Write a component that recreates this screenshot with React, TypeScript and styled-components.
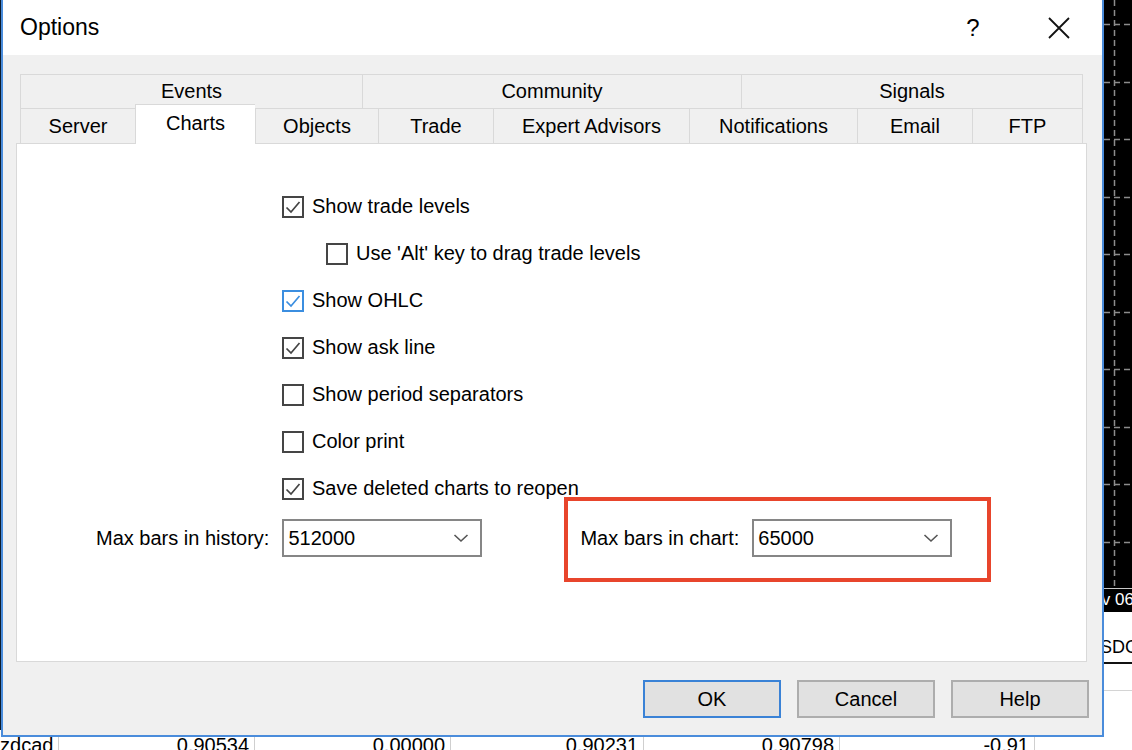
import styled, { createGlobalStyle } from 'styled-components';

const GlobalStyle = createGlobalStyle`
  html, body {
    margin: 0;
    padding: 0;
  }
  body {
    width: 1132px;
    height: 750px;
    overflow: hidden;
    background: #fff;
    font-family: "Liberation Sans", Arial, sans-serif;
    color: #000;
  }
`;

const Desktop = styled.div`
  position: relative;
  width: 1132px;
  height: 750px;
  overflow: hidden;
  display: flex;
  flex-direction: column;
  background: #fff;
`;

const Workspace = styled.div`
  flex: 1;
  display: flex;
  min-height: 0;
`;

const LeftEdge = styled.div`
  width: 1px;
  background: #0d1b2c;
`;

const Behind = styled.div`
  flex: 1;
`;

const RightColumn = styled.div`
  width: 28px;
  display: flex;
  flex-direction: column;
`;

const Chart = styled.div`
  height: 612px;
  background: #000;
  display: flex;
  flex-direction: column;
`;

const TimeAxis = styled.div`
  height: 22px;
  border-top: 1px solid #c8c8c8;
  color: #fff;
  font-size: 17px;
  line-height: 22px;
  white-space: nowrap;
  margin-left: -24px;
`;

const SymbolTabs = styled.div`
  padding-top: 20px;
  height: 30px;
  border-bottom: 2px solid #111;
  font-size: 18px;
  line-height: 30px;
  white-space: nowrap;
  margin-left: -17px;
`;

const Separator = styled.div`
  margin-top: 26px;
  border-top: 1px solid #d4d4d4;
`;

const QuoteRow = styled.div`
  height: 20px;
  display: flex;
  align-items: flex-start;
  font-size: 20px;
  line-height: 30px;
`;

const QuoteCell = styled.div<{ $w: number; $left?: boolean }>`
  width: ${(p) => p.$w}px;
  height: 30px;
  box-sizing: border-box;
  border-right: 1px solid #cfcfcf;
  padding-right: 5px;
  text-align: ${(p) => (p.$left ? 'left' : 'right')};
  text-indent: ${(p) => (p.$left ? '-11px' : '0')};
  overflow: hidden;
  white-space: nowrap;
`;

const Dialog = styled.div`
  position: absolute;
  left: 1px;
  top: 0;
  width: 1103px;
  height: 737px;
  box-sizing: border-box;
  border: 2px solid #4a8cdb;
  border-top: none;
  background: #f0f0f0;
  display: flex;
  flex-direction: column;
  z-index: 2;
`;

const TitleBar = styled.div`
  height: 55px;
  background: #fff;
  display: flex;
  align-items: center;
  padding-left: 17px;
  padding-right: 20px;
`;

const Title = styled.div`
  flex: 1;
  font-size: 23px;
`;

const TitleControls = styled.div`
  display: flex;
  align-items: center;
  gap: 40px;
`;

const TitleButton = styled.div`
  width: 46px;
  height: 40px;
  display: flex;
  align-items: center;
  justify-content: center;
  font-size: 24px;
`;

const Body = styled.div`
  flex: 1;
  display: flex;
  flex-direction: column;
  padding: 19px 13px 17px 13px;
`;

const TabControl = styled.div`
  margin-right: 2px;
  display: flex;
  flex-direction: column;
`;

const TabStrip = styled.div`
  padding: 0 4px;
  display: flex;
  flex-direction: column;
`;

const TabRow = styled.div<{ $h: number }>`
  height: ${(p) => p.$h}px;
  display: flex;
  align-items: flex-start;
`;

const Tab = styled.div<{ $w: number; $active?: boolean }>`
  position: relative;
  width: ${(p) => p.$w}px;
  height: ${(p) => (p.$active ? 'calc(100% + 5px)' : '100%')};
  margin-top: ${(p) => (p.$active ? '-4px' : '0')};
  padding-bottom: ${(p) => (p.$active ? '3px' : '0')};
  box-sizing: border-box;
  border-top: 1px solid #d9d9d9;
  border-left: 1px solid #d9d9d9;
  background: ${(p) => (p.$active ? '#fff' : '#f0f0f0')};
  z-index: ${(p) => (p.$active ? 1 : 0)};
  display: flex;
  align-items: center;
  justify-content: center;
  font-size: 20px;
  white-space: nowrap;
  &:last-child {
    border-right: 1px solid #d9d9d9;
  }
`;

const Panel = styled.div`
  height: 519px;
  box-sizing: border-box;
  background: #fff;
  border: 1px solid #d9d9d9;
  padding: 39px 0 0 79px;
  display: flex;
  flex-direction: column;
`;

const CheckList = styled.div`
  padding-left: 186px;
  display: flex;
  flex-direction: column;
`;

const CheckRow = styled.label<{ $indent?: boolean }>`
  height: 47px;
  display: flex;
  align-items: center;
  gap: 8px;
  padding-left: ${(p) => (p.$indent ? '44px' : '0')};
  font-size: 20px;
  white-space: nowrap;
`;

const Box = styled.span<{ $focus?: boolean }>`
  width: 22px;
  height: 22px;
  box-sizing: border-box;
  border: 2px solid ${(p) => (p.$focus ? '#3b8ee0' : '#454545')};
  background: #fff;
  display: flex;
  align-items: center;
  justify-content: center;
`;

const FormRow = styled.div`
  margin-top: 7px;
  display: flex;
  align-items: center;
  gap: 98px;
`;

const Field = styled.div`
  position: relative;
  display: flex;
  align-items: center;
  gap: 13px;
  font-size: 20px;
  white-space: nowrap;
`;

const Highlight = styled.div`
  position: absolute;
  left: -16px;
  top: -22px;
  right: -39px;
  bottom: -25px;
  border: 4px solid #e8452c;
  pointer-events: none;
`;

const Combo = styled.div`
  width: 200px;
  height: 38px;
  box-sizing: border-box;
  border: 2px solid #868686;
  background: #fff;
  display: flex;
  align-items: center;
  justify-content: space-between;
  padding: 0 11px 0 4px;
  font-size: 20px;
`;

const Footer = styled.div`
  margin-top: 18px;
  display: flex;
  justify-content: flex-end;
  gap: 16px;
`;

const Button = styled.button<{ $default?: boolean }>`
  width: 138px;
  height: 38px;
  box-sizing: border-box;
  background: #e1e1e1;
  border: 2px solid ${(p) => (p.$default ? '#3a82d6' : '#adadad')};
  font-family: "Liberation Sans", Arial, sans-serif;
  font-size: 20px;
  color: #000;
  padding: 0;
`;

const Check = ({ color }: { color: string }) => (
  <svg width="18" height="18" viewBox="0 0 18 18">
    <polyline points="2.5,9.5 7,14 15.5,4" fill="none" stroke={color} strokeWidth="1.7" />
  </svg>
);

const Chevron = () => (
  <svg width="16" height="10" viewBox="0 0 16 10">
    <polyline points="1.5,2 8,8 14.5,2" fill="none" stroke="#555" strokeWidth="1.6" />
  </svg>
);

const CloseIcon = () => (
  <svg width="24" height="24" viewBox="0 0 24 24">
    <path d="M2 2 L22 22 M22 2 L2 22" stroke="#111" strokeWidth="1.8" fill="none" />
  </svg>
);

const ChartGrid = () => {
  const ys = [24, 82, 139, 197, 254, 312, 369, 427, 484, 542];
  return (
    <svg width="28" height="588" viewBox="0 0 28 588" style={{ display: 'block' }}>
      <rect width="28" height="588" fill="#000" />
      <line x1="10.5" y1="0" x2="10.5" y2="588" stroke="#8c8c8c" strokeWidth="1.5" strokeDasharray="6 4" />
      {ys.map((y) => (
        <line key={y} x1="0" y1={y + 0.5} x2="28" y2={y + 0.5} stroke="#8c8c8c" strokeWidth="1.5" strokeDasharray="6 4" />
      ))}
    </svg>
  );
};

const topTabs = [
  { label: 'Events', w: 342 },
  { label: 'Community', w: 379 },
  { label: 'Signals', w: 342 },
];

const bottomTabs = [
  { label: 'Server', w: 115 },
  { label: 'Charts', w: 120, active: true },
  { label: 'Objects', w: 123 },
  { label: 'Trade', w: 115 },
  { label: 'Expert Advisors', w: 196 },
  { label: 'Notifications', w: 168 },
  { label: 'Email', w: 115 },
  { label: 'FTP', w: 111 },
];

const options = [
  { label: 'Show trade levels', checked: true },
  { label: "Use 'Alt' key to drag trade levels", checked: false, indent: true },
  { label: 'Show OHLC', checked: true, focus: true },
  { label: 'Show ask line', checked: true },
  { label: 'Show period separators', checked: false },
  { label: 'Color print', checked: false },
  { label: 'Save deleted charts to reopen', checked: true },
];

const quotes = [
  { text: 'nzdcad', w: 59, left: true },
  { text: '0.90534', w: 196 },
  { text: '0.00000', w: 196 },
  { text: '0.90231', w: 193 },
  { text: '0.90798', w: 196 },
  { text: '-0.91', w: 195 },
];

export default function App() {
  return (
    <Desktop>
      <GlobalStyle />
      <Workspace>
        <LeftEdge />
        <Behind />
        <RightColumn>
          <Chart>
            <ChartGrid />
            <TimeAxis>Nov 06</TimeAxis>
          </Chart>
          <SymbolTabs>USDCHF</SymbolTabs>
          <Separator />
        </RightColumn>
      </Workspace>
      <QuoteRow>
        {quotes.map((q) => (
          <QuoteCell key={q.text} $w={q.w} $left={q.left}>
            {q.text}
          </QuoteCell>
        ))}
      </QuoteRow>

      <Dialog>
        <TitleBar>
          <Title>Options</Title>
          <TitleControls>
            <TitleButton>?</TitleButton>
            <TitleButton>
              <CloseIcon />
            </TitleButton>
          </TitleControls>
        </TitleBar>
        <Body>
          <TabControl>
            <TabStrip>
              <TabRow $h={34}>
                {topTabs.map((t) => (
                  <Tab key={t.label} $w={t.w}>
                    {t.label}
                  </Tab>
                ))}
              </TabRow>
              <TabRow $h={35}>
                {bottomTabs.map((t) => (
                  <Tab key={t.label} $w={t.w} $active={t.active}>
                    {t.label}
                  </Tab>
                ))}
              </TabRow>
            </TabStrip>
            <Panel>
              <CheckList>
                {options.map((o) => (
                  <CheckRow key={o.label} $indent={o.indent}>
                    <Box $focus={o.focus}>
                      {o.checked && <Check color={o.focus ? '#3b8ee0' : '#444'} />}
                    </Box>
                    {o.label}
                  </CheckRow>
                ))}
              </CheckList>
              <FormRow>
                <Field>
                  Max bars in history:
                  <Combo>
                    512000
                    <Chevron />
                  </Combo>
                </Field>
                <Field>
                  Max bars in chart:
                  <Combo>
                    65000
                    <Chevron />
                  </Combo>
                  <Highlight />
                </Field>
              </FormRow>
            </Panel>
          </TabControl>
          <Footer>
            <Button $default>OK</Button>
            <Button>Cancel</Button>
            <Button>Help</Button>
          </Footer>
        </Body>
      </Dialog>
    </Desktop>
  );
}
